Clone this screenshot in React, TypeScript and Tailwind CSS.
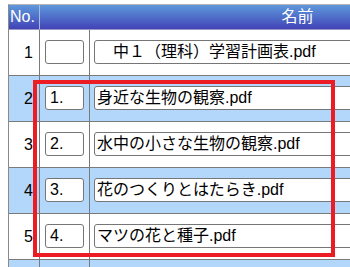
import React from 'react';

type Row = { no: number; idx: string; name: string; label?: string };

const rows: Row[] = [
  { no: 1, idx: '', name: '　中１（理科）学習計画表.pdf' },
  { no: 2, idx: '1.', name: '身近な生物の観察.pdf' },
  { no: 3, idx: '2.', name: '水中の小さな生物の観察.pdf' },
  { no: 4, idx: '3.', name: '花のつくりとはたらき.pdf' },
  { no: 5, idx: '4.', name: 'マツの花と種子.pdf' },
  { no: 6, idx: '', name: '', label: '' },
];

const FileRow = ({ row }: { row: Row }) => {
  const shaded = row.no % 2 === 0;
  return (
    <div className={`flex h-[46px] border-b border-[#7a7a7a] ${shaded ? 'bg-[#b3d6fb]' : 'bg-white'}`}>
      {/* 番号 */}
      <div className="w-[31px] shrink-0 border-r border-[#7a7a7a] flex items-center justify-end pr-[6px] text-[16px] leading-none text-black">
        {row.label ?? row.no}
      </div>
      {/* 見出し番号 */}
      <div className="w-[50px] shrink-0 border-r border-[#7a7a7a] pt-[10px] pl-[5px]">
        <div className="w-[39px] h-[24px] bg-white border border-[#767676] rounded-[3px] px-[4px] text-[16px] leading-[22px] text-black">
          {row.idx}
        </div>
      </div>
      {/* ファイル名 */}
      <div className="flex-1 pt-[10px] pl-[4px]">
        <div className="w-[440px] h-[24px] bg-white border border-[#767676] rounded-[3px] px-[2px] text-[16px] leading-[22px] text-black whitespace-nowrap">
          {row.name}
        </div>
      </div>
    </div>
  );
};

export default function App() {
  return (
    <div
      className="relative w-[350px] h-[267px] overflow-hidden bg-white"
      style={{ fontFamily: '"Liberation Sans", "Noto Sans CJK JP", sans-serif' }}
    >
      <div className="ml-2 mt-1 w-[547px] border-l border-t border-l-[#8a8a8a] border-t-[#b4b4b4]">
        {/* ヘッダー */}
        <div className="flex h-[25px] border-b border-[#9a9ac8] bg-linear-to-b from-[#5f98db] to-[#4242b6] text-white text-[16px] leading-none">
          <div className="w-[31px] shrink-0 border-r border-[#a9b9e6] flex items-center pl-[1px]">No.</div>
          <div className="flex-1 flex items-center justify-center">名前</div>
        </div>
        {rows.map((row) => (
          <FileRow key={row.no} row={row} />
        ))}
      </div>

      {/* 赤枠 */}
      <div className="absolute left-[33px] top-[80px] w-[302px] h-[177px] border-4 border-[#ec1c24] pointer-events-none" />
    </div>
  );
}
